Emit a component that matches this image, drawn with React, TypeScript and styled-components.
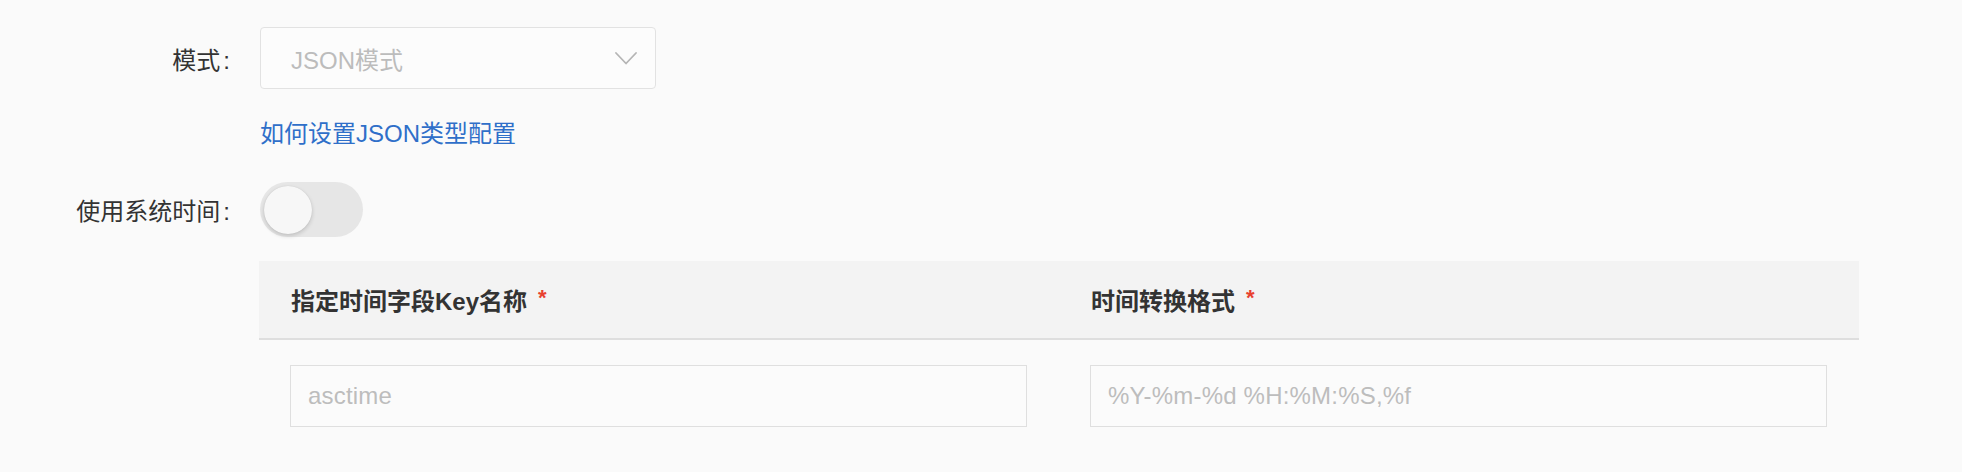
import React from "react";
import styled, { createGlobalStyle } from "styled-components";

const GlobalStyle = createGlobalStyle`
  html, body {
    margin: 0;
    padding: 0;
    background: #fafafa;
  }
  body {
    font-family: "Liberation Sans", "Noto Sans CJK SC", sans-serif;
    color: #333;
  }
`;

const Page = styled.div`
  width: 1962px;
  height: 472px;
  box-sizing: border-box;
  padding-top: 27px;
  background: #fafafa;
  overflow: hidden;
`;

const FormRow = styled.div<{ $mt?: number; $h: number }>`
  display: grid;
  grid-template-columns: 260px 1fr;
  align-items: center;
  min-height: ${(p) => p.$h}px;
  margin-top: ${(p) => p.$mt ?? 0}px;
`;

const Label = styled.label`
  text-align: right;
  padding-right: 30px;
  font-size: 24px;
  color: #333;
  white-space: nowrap;
`;

const Colon = styled.span`
  margin-left: 3px;
`;

const Select = styled.div`
  width: 396px;
  height: 62px;
  box-sizing: border-box;
  border: 1px solid #e2e2e2;
  border-radius: 4px;
  background: #fcfcfc;
  display: flex;
  align-items: center;
  justify-content: space-between;
  padding: 0 18px 0 30px;
  font-size: 24px;
  color: #bcbcbc;
`;

const Link = styled.a`
  font-size: 24px;
  color: #2f6fc9;
  text-decoration: none;
  line-height: 36px;
`;

const Switch = styled.div`
  width: 103px;
  height: 55px;
  border-radius: 28px;
  background: #e6e6e6;
  box-sizing: border-box;
  padding: 3px 4px;
  display: flex;
  align-items: center;
`;

const Knob = styled.span`
  width: 48px;
  height: 48px;
  border-radius: 50%;
  background: #f7f7f7;
  box-shadow: 0 2px 4px rgba(0, 0, 0, 0.16), 0 0 1px rgba(0, 0, 0, 0.12);
`;

const TableWrap = styled.div`
  margin-top: 24px;
  margin-left: 259px;
  width: 1600px;
`;

const HeaderRow = styled.div`
  display: grid;
  grid-template-columns: 1fr 1fr;
  height: 79px;
  box-sizing: border-box;
  background: #f3f3f3;
  border-bottom: 2px solid #dedede;
`;

const HeaderCell = styled.div`
  display: flex;
  align-items: center;
  padding-left: 32px;
  font-size: 24px;
  font-weight: 700;
  color: #333;
`;

const Required = styled.span`
  color: #e8402f;
  margin-left: 11px;
  font-size: 22px;
  font-weight: 700;
  position: relative;
  top: -2px;
`;

const BodyRow = styled.div`
  display: grid;
  grid-template-columns: 1fr 1fr;
  padding-top: 25px;
`;

const BodyCell = styled.div`
  padding: 0 32px 0 31px;
`;

const Input = styled.div`
  height: 62px;
  box-sizing: border-box;
  border: 1.5px solid #dfdfdf;
  background: #fbfbfb;
  display: flex;
  align-items: center;
  padding-left: 17px;
  font-size: 24px;
  letter-spacing: 0.2px;
  color: #bdbdbd;
`;

const Chevron = () => (
  <svg width="22" height="13" viewBox="0 0 22 13" fill="none">
    <path d="M1 1 L11 11.5 L21 1" stroke="#b5b5b5" strokeWidth="1.8" strokeLinecap="round" strokeLinejoin="round" />
  </svg>
);

export default function App() {
  return (
    <>
      <GlobalStyle />
      <Page>
        <FormRow $h={62}>
          <Label>
            模式<Colon>:</Colon>
          </Label>
          <Select>
            <span>JSON模式</span>
            <Chevron />
          </Select>
        </FormRow>
        <FormRow $h={36} $mt={27}>
          <span />
          <Link href="#">如何设置JSON类型配置</Link>
        </FormRow>
        <FormRow $h={55} $mt={30}>
          <Label>
            使用系统时间<Colon>:</Colon>
          </Label>
          <Switch>
            <Knob />
          </Switch>
        </FormRow>
        <TableWrap>
          <HeaderRow>
            <HeaderCell>
              指定时间字段Key名称<Required>*</Required>
            </HeaderCell>
            <HeaderCell>
              时间转换格式<Required>*</Required>
            </HeaderCell>
          </HeaderRow>
          <BodyRow>
            <BodyCell>
              <Input>asctime</Input>
            </BodyCell>
            <BodyCell>
              <Input>%Y-%m-%d %H:%M:%S,%f</Input>
            </BodyCell>
          </BodyRow>
        </TableWrap>
      </Page>
    </>
  );
}
